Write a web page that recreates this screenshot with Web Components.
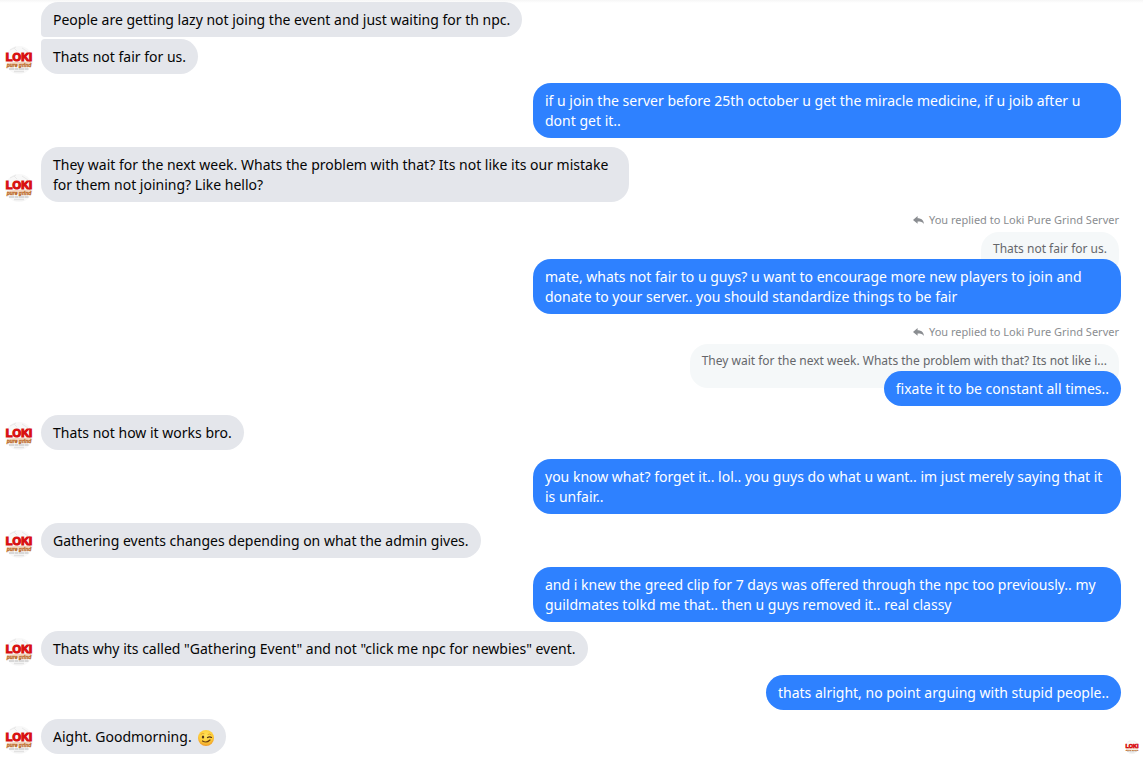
<!DOCTYPE html>
<html lang="en">
<head>
<meta charset="utf-8">
<meta name="viewport" content="width=device-width, initial-scale=1">
<title>Chat</title>
<style>
  body { margin: 0; background: #fff; font: 14px/20px "Noto Sans", "Open Sans", sans-serif; color: #050505; }
</style>
</head>
<body>
<chat-thread>
  <chat-message from="them" grouped>People are getting lazy not joing the event and just waiting for th npc.</chat-message>
  <chat-message from="them" last>Thats not fair for us.</chat-message>
  <chat-message from="me">if u join the server before 25th october u get the miracle medicine, if u joib after u dont get it..</chat-message>
  <chat-message from="them">They wait for the next week. Whats the problem with that? Its not like its our mistake for them not joining? Like hello?</chat-message>
  <chat-message from="me"><reply-quote slot="quote">Thats not fair for us.</reply-quote>mate, whats not fair to u guys? u want to encourage more new players to join and donate to your server.. you should standardize things to be fair</chat-message>
  <chat-message from="me"><reply-quote slot="quote">They wait for the next week. Whats the problem with that? Its not like i...</reply-quote>fixate it to be constant all times..</chat-message>
  <chat-message from="them">Thats not how it works bro.</chat-message>
  <chat-message from="me">you know what? forget it.. lol.. you guys do what u want.. im just merely saying that it is unfair..</chat-message>
  <chat-message from="them">Gathering events changes depending on what the admin gives.</chat-message>
  <chat-message from="me">and i knew the greed clip for 7 days was offered through the npc too previously.. my guildmates tolkd me that.. then u guys removed it.. real classy</chat-message>
  <chat-message from="them">Thats why its called "Gathering Event" and not "click me npc for newbies" event.</chat-message>
  <chat-message from="me">thats alright, no point arguing with stupid people..</chat-message>
  <chat-message from="them" seen>Aight. Goodmorning. <wink-emoji></wink-emoji></chat-message>
</chat-thread>

<script>
const define = (name, html, setup) => {
  const template = document.createElement('template');
  template.innerHTML = html;
  customElements.define(name, class extends HTMLElement {
    constructor() {
      super();
      this.attachShadow({ mode: 'open' }).append(template.content.cloneNode(true));
    }
    connectedCallback() { if (setup) setup(this, this.shadowRoot); }
  });
};

define('server-avatar', `
  <style>
    :host { display: block; width: 28px; height: 28px; }
    svg { display: block; width: 100%; height: 100%; }
  </style>
  <svg viewBox="0 0 28 28" role="img" aria-label="Loki Pure Grind Server">
    <circle cx="14" cy="14" r="14" fill="#f8f8f8"/>
    <path d="M5 4l6-3M17 2l6 4M9 2l3 3" stroke="#e9e9e9" fill="none"/>
    <path d="M2 17q12-2 24-1v3q-12-1-24 1z" fill="#f0c8a8" opacity=".7"/>
    <path d="M4 23h20" stroke="#c4c4c4" stroke-width="1.500" stroke-dasharray="5 .5 4 .5" opacity=".8"/>
    <path d="M9 25.500h10" stroke="#e2e2e2" stroke-width="1.500"/>
    <g font-family="Liberation Sans, sans-serif" font-weight="700" text-anchor="middle">
      <text x="14" y="15" font-size="11" fill="#e01212" stroke="#d81010" stroke-width="1.200">LOKI</text>
      <text x="14" y="21" font-size="5" font-style="italic" fill="#b8641c" stroke="#c07030" stroke-width=".3">pure grind</text>
    </g>
  </svg>`);

define('wink-emoji', `
  <style>
    :host { display: inline-block; width: 16px; height: 16px; margin-left: 3px; vertical-align: -4px; }
    svg { display: block; width: 100%; height: 100%; }
  </style>
  <svg viewBox="0 0 16 16" role="img" aria-label="Winking face">
    <defs><radialGradient id="face" cx=".5" cy=".35" r=".65">
      <stop offset="0" stop-color="#ffe45c"/><stop offset=".65" stop-color="#fecb35"/><stop offset="1" stop-color="#ee9a2b"/>
    </radialGradient></defs>
    <circle cx="8" cy="8" r="8" fill="url(#face)"/>
    <ellipse cx="5" cy="7" rx="1.200" ry="1.600" fill="#53341b"/>
    <path d="M9.500 7.600q2-1.500 4-.2" fill="none" stroke="#53341b" stroke-width="1.200" stroke-linecap="round"/>
    <path d="M4.500 11q4 2.400 7.500-1" fill="none" stroke="#6b3d13" stroke-width="1.200" stroke-linecap="round"/>
    <path d="M3 4.200q1.500-1.400 3-.6M10 4.400q1.500-1 3 .2" fill="none" stroke="#d99023" stroke-width=".7" stroke-linecap="round"/>
  </svg>`);

define('reply-quote', `
  <style>
    :host { display: flex; flex-direction: column; align-items: flex-end; gap: 3px; padding-right: 2px; margin-bottom: -17px; }
    .label { display: flex; align-items: center; gap: 5px; font-size: 11px; line-height: 18px; color: #8a8d91; }
    svg { width: 11px; height: 8px; }
    .quote { box-sizing: border-box; height: 44px; padding: 8px 12px; border-radius: 18px; background: #f5f8f9; color: #65676b; font-size: 12px; line-height: 18px; }
  </style>
  <div class="label">
    <svg viewBox="0 0 11 8" aria-hidden="true"><path d="M4.600 0v2.200C8.500 2.300 10.600 4 11 8 9.600 6.100 7.800 5.600 4.600 5.600V7.800L0 3.900z" fill="#8a8d91"/></svg>
    <span>You replied to Loki Pure Grind Server</span>
  </div>
  <div class="quote"><slot></slot></div>`);

define('chat-message', `
  <style>
    :host { display: flex; align-items: flex-end; gap: 8px; margin-bottom: 9px; padding: 0 22px 0 5px; position: relative; }
    :host([from="me"]) { flex-direction: column; align-items: flex-end; gap: 0; }
    :host([grouped]) { margin-bottom: 2px; }
    .bubble { position: relative; box-sizing: border-box; max-width: 588px; padding: 8px 12px 7px; border-radius: 18px; background: #e4e6eb; overflow-wrap: break-word; }
    :host([from="me"]) .bubble { background: #2e81ff; color: #fff; }
    :host([grouped]) .bubble { border-bottom-left-radius: 4px; }
    :host([last]) .bubble { border-top-left-radius: 4px; }
    .avatar { flex: none; width: 28px; height: 28px; }
    .seen { display: none; }
    :host([seen]) { padding-right: 4px; }
    :host([seen]) .seen { display: block; width: 14px; height: 14px; margin-left: auto; }
  </style>
  <server-avatar class="avatar"></server-avatar>
  <slot name="quote"></slot>
  <div class="bubble"><slot></slot></div>
  <server-avatar class="seen"></server-avatar>`,
  (host, root) => {
    host.setAttribute('role', 'listitem');
    if (host.getAttribute('from') === 'me') root.querySelectorAll('server-avatar').forEach(a => a.remove());
    else {
      if (host.hasAttribute('grouped')) root.querySelector('.avatar').replaceWith(Object.assign(document.createElement('span'), { className: 'avatar' }));
      if (!host.hasAttribute('seen')) root.querySelector('.seen').remove();
    }
  });

define('chat-thread', `
  <style>
    :host { display: block; padding-top: 2px; background: linear-gradient(#f6f6f6, #fff 3px) no-repeat; }
  </style>
  <slot></slot>`, host => host.setAttribute('role', 'list'));
</script>
</body>
</html>
